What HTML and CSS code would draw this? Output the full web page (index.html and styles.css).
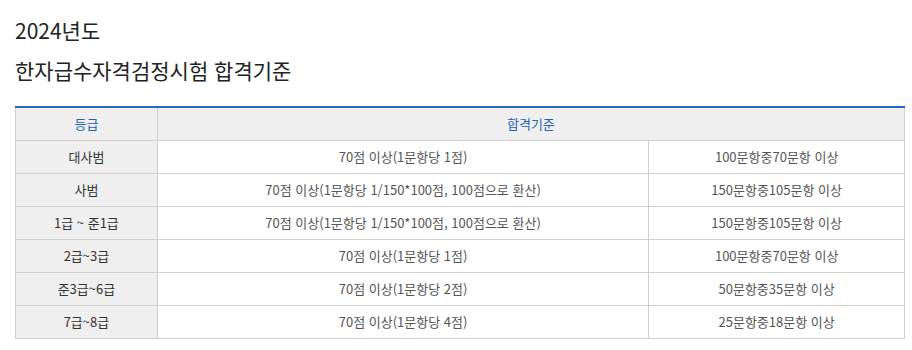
FILE: index.html
```html
<!DOCTYPE html>
<html lang="ko">
<head>
<meta charset="utf-8">
<link rel="stylesheet" href="styles.css">
</head>
<body>
<div class="page">
  <h2 class="title"><span>2024년도</span><span>한자급수자격검정시험 합격기준</span></h2>
  <table class="std">
    <colgroup>
      <col class="c1"><col class="c2"><col class="c3">
    </colgroup>
    <thead>
      <tr><th>등급</th><th colspan="2">합격기준</th></tr>
    </thead>
    <tbody>
      <tr><th>대사범</th><td>70점 이상(1문항당 1점)</td><td>100문항중70문항 이상</td></tr>
      <tr><th>사범</th><td>70점 이상(1문항당 1/150*100점, 100점으로 환산)</td><td>150문항중105문항 이상</td></tr>
      <tr><th>1급 ~ 준1급</th><td>70점 이상(1문항당 1/150*100점, 100점으로 환산)</td><td>150문항중105문항 이상</td></tr>
      <tr><th>2급~3급</th><td>70점 이상(1문항당 1점)</td><td>100문항중70문항 이상</td></tr>
      <tr><th>준3급~6급</th><td>70점 이상(1문항당 2점)</td><td>50문항중35문항 이상</td></tr>
      <tr><th>7급~8급</th><td>70점 이상(1문항당 4점)</td><td>25문항중18문항 이상</td></tr>
    </tbody>
  </table>
</div>
</body>
</html>
```
FILE: styles.css
```css
html, body {
  margin: 0;
  padding: 0;
  background: #fff;
}
.page {
  padding: 10px 7px 0 15px;
  font-family: "Noto Sans CJK KR", "Noto Sans", sans-serif;
  color: #222;
}
.title {
  margin: 0 0 16px 0;
  display: flex;
  flex-direction: column;
  font-size: 21px;
  font-weight: 400;
  line-height: 40px;
  letter-spacing: 0;
  color: #222;
}
.std {
  width: 890px;
  border-collapse: collapse;
  border-top: 2px solid #1e6bc6;
  font-size: 13px;
  color: #555;
  letter-spacing: 0;
}
.c1 { width: 142px; }
.c2 { width: 492px; }
.c3 { width: 256px; }
.std th, .std td {
  border: 1px solid #cfcfcf;
  height: 33px;
  padding: 0;
  text-align: center;
  vertical-align: middle;
  font-weight: 400;
  box-sizing: border-box;
}
.std tr:first-child th { border-top: none; }
.std thead th {
  background: #efefef;
  color: #2461b2;
}
.std tbody th {
  background: #efefef;
  color: #333;
}
.std td {
  background: #fff;
}
```
